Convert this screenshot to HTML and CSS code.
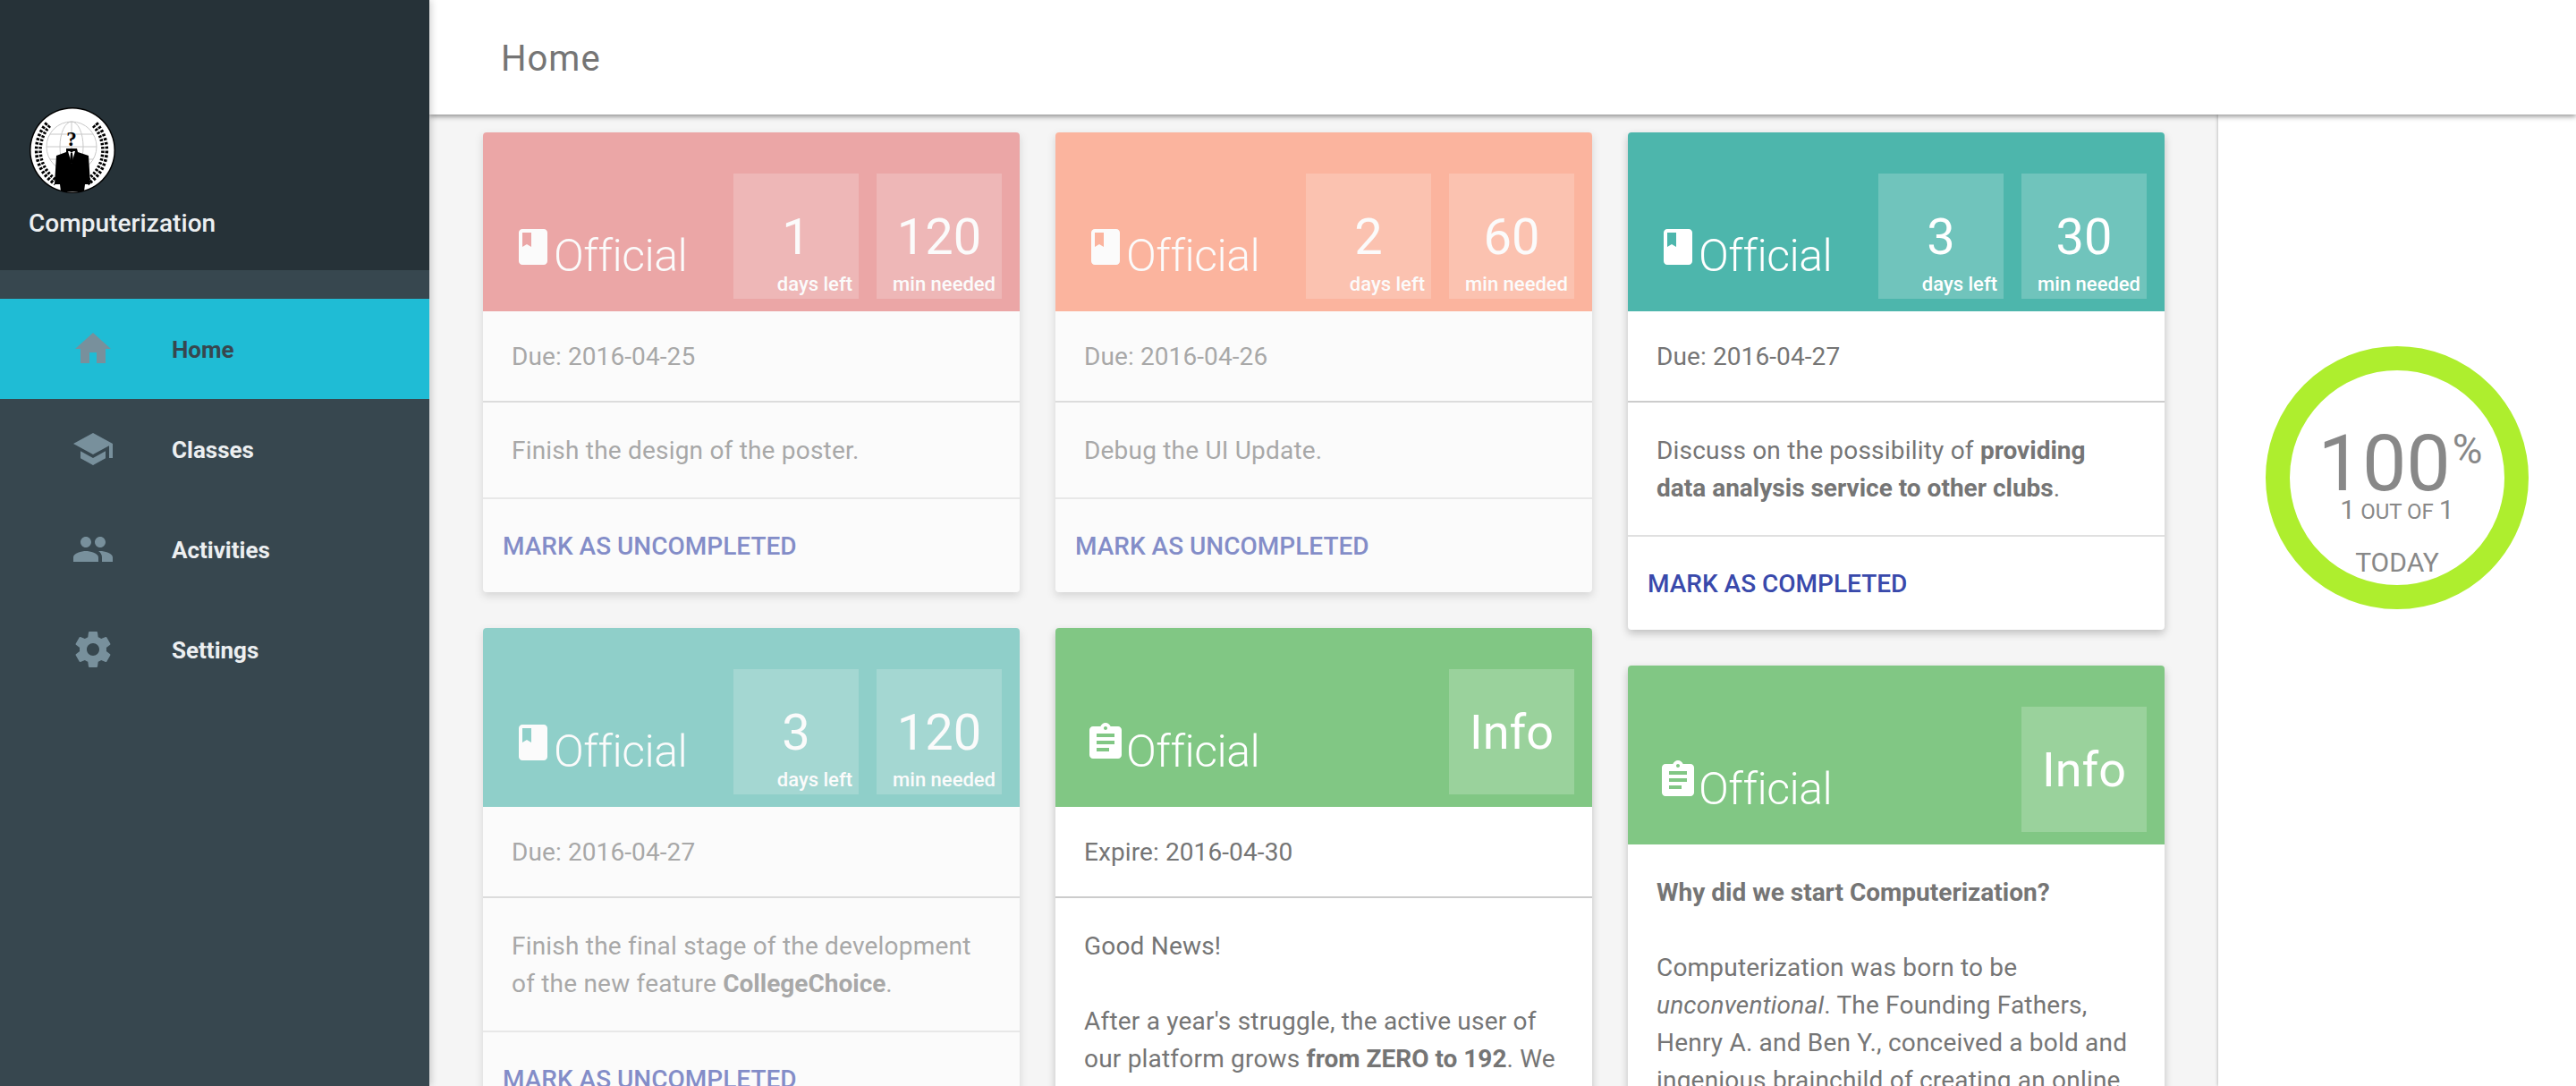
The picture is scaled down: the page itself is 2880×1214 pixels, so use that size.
FILE: index.html
```html
<!DOCTYPE html>
<html lang="en">
<head>
<meta charset="utf-8">
<title>Computerization - Home</title>
<link rel="stylesheet" href="styles.css">
</head>
<body>
<svg class="defs" width="0" height="0" aria-hidden="true">
  <symbol id="i-book" viewBox="0 0 24 24"><path d="M18 2H6c-1.1 0-2 .9-2 2v16c0 1.1.9 2 2 2h12c1.1 0 2-.9 2-2V4c0-1.1-.9-2-2-2zM6 4h5v8l-2.5-1.5L6 12V4z"/></symbol>
  <symbol id="i-clip" viewBox="0 0 24 24"><path d="M19 3h-4.18C14.4 1.84 13.3 1 12 1c-1.3 0-2.4.84-2.82 2H5c-1.1 0-2 .9-2 2v14c0 1.1.9 2 2 2h14c1.1 0 2-.9 2-2V5c0-1.1-.9-2-2-2zm-7 0c.55 0 1 .45 1 1s-.45 1-1 1-1-.45-1-1 .45-1 1-1zm2 14H7v-2h7v2zm3-4H7v-2h10v2zm0-4H7V7h10v2z"/></symbol>
</svg>
<aside class="sidebar">
  <div class="brand">
    <svg class="logo" viewBox="0 0 96 96" aria-hidden="true">
      <circle cx="48" cy="48" r="48" fill="#000"/>
      <circle cx="48" cy="48" r="46.5" fill="#fff"/>
      <g fill="none" stroke="#c8c8c8" stroke-width="1">
        <circle cx="47" cy="44" r="28"/>
        <ellipse cx="47" cy="44" rx="13" ry="28"/>
        <path d="M47 16v56M19 44h56M23 30h48M23 58h48"/>
      </g>
      <g fill="none" stroke="#000">
        <path d="M21 19C4 38 6 68 30 84" stroke-width="8" stroke-dasharray="2.6 2"/>
        <path d="M73 19C90 38 88 68 64 84" stroke-width="8" stroke-dasharray="2.6 2"/>
      </g>
      <g fill="none" stroke="#fff" stroke-width="1">
        <path d="M21 19C4 38 6 68 30 84"/>
        <path d="M73 19C90 38 88 68 64 84"/>
      </g>
      <path d="M41 46h12l1 4 12 4 2 32-6 0-1 8H35l-1-8-6 0 2-32 11-4z" fill="#000"/>
      <path d="M43 49l4 14 4-14-2 0-2 2-2-2z" fill="#fff"/>
      <path d="M46 51h2l1 9-2 4-2-4z" fill="#000"/>
      <text class="logo-q" x="47" y="43" text-anchor="middle">?</text>
    </svg>
    <div class="brand-name">Computerization</div>
  </div>
  <nav class="nav">
    <a class="nav-item active">
      <svg class="nav-icon" viewBox="0 0 24 24"><path d="M10 20v-6h4v6h5v-8h3L12 3 2 12h3v8z"/></svg>
      <span class="nav-text">Home</span>
    </a>
    <a class="nav-item">
      <svg class="nav-icon" viewBox="0 0 24 24"><path d="M5 13.18v4L12 21l7-3.82v-4L12 17l-7-3.82zM12 3L1 9l11 6 9-4.91V17h2V9L12 3z"/></svg>
      <span class="nav-text">Classes</span>
    </a>
    <a class="nav-item">
      <svg class="nav-icon" viewBox="0 0 24 24"><path d="M16 11c1.66 0 2.99-1.34 2.99-3S17.66 5 16 5c-1.66 0-3 1.34-3 3s1.34 3 3 3zm-8 0c1.66 0 2.99-1.34 2.99-3S9.66 5 8 5C6.34 5 5 6.34 5 8s1.34 3 3 3zm0 2c-2.33 0-7 1.17-7 3.5V19h14v-2.5c0-2.33-4.67-3.5-7-3.5zm8 0c-.29 0-.62.02-.97.05 1.16.84 1.97 1.97 1.97 3.45V19h6v-2.5c0-2.33-4.67-3.5-7-3.5z"/></svg>
      <span class="nav-text">Activities</span>
    </a>
    <a class="nav-item">
      <svg class="nav-icon" viewBox="0 0 24 24"><path d="M19.43 12.98c.04-.32.07-.64.07-.98s-.03-.66-.07-.98l2.11-1.65c.19-.15.24-.42.12-.64l-2-3.46c-.12-.22-.39-.3-.61-.22l-2.49 1c-.52-.4-1.08-.73-1.69-.98l-.38-2.65C14.46 2.18 14.25 2 14 2h-4c-.25 0-.46.18-.49.42l-.38 2.65c-.61.25-1.17.59-1.69.98l-2.49-1c-.23-.09-.49 0-.61.22l-2 3.46c-.13.22-.07.49.12.64l2.11 1.65c-.04.32-.07.65-.07.98s.03.66.07.98l-2.11 1.65c-.19.15-.24.42-.12.64l2 3.46c.12.22.39.3.61.22l2.49-1c.52.4 1.08.73 1.69.98l.38 2.65c.03.24.24.42.49.42h4c.25 0 .46-.18.49-.42l.38-2.65c.61-.25 1.17-.59 1.69-.98l2.49 1c.23.09.49 0 .61-.22l2-3.46c.12-.22.07-.49-.12-.64l-2.11-1.65zM12 15.5c-1.93 0-3.5-1.57-3.5-3.5s1.57-3.5 3.5-3.5 3.5 1.57 3.5 3.5-1.57 3.5-3.5 3.5z"/></svg>
      <span class="nav-text">Settings</span>
    </a>
  </nav>
</aside>
<div class="main">
  <header class="topbar"><h1 class="title">Home</h1></header>
  <div class="content">
    <div class="feed">
      <div class="column">
        <article class="card done pink">
          <div class="card-head">
            <div class="label"><svg class="label-icon"><use href="#i-book"/></svg><span class="label-text">Official</span></div>
            <div class="tiles">
              <div class="tile"><div class="tile-value">1</div><div class="tile-cap">days left</div></div>
              <div class="tile"><div class="tile-value">120</div><div class="tile-cap">min needed</div></div>
            </div>
          </div>
          <div class="card-date">Due: 2016-04-25</div>
          <div class="card-body"><p>Finish the design of the poster.</p></div>
          <div class="card-foot"><a class="action">MARK AS UNCOMPLETED</a></div>
        </article>
        <article class="card done teal">
          <div class="card-head">
            <div class="label"><svg class="label-icon"><use href="#i-book"/></svg><span class="label-text">Official</span></div>
            <div class="tiles">
              <div class="tile"><div class="tile-value">3</div><div class="tile-cap">days left</div></div>
              <div class="tile"><div class="tile-value">120</div><div class="tile-cap">min needed</div></div>
            </div>
          </div>
          <div class="card-date">Due: 2016-04-27</div>
          <div class="card-body"><p>Finish the final stage of the development of the new feature <b>CollegeChoice</b>.</p></div>
          <div class="card-foot"><a class="action">MARK AS UNCOMPLETED</a></div>
        </article>
      </div>
      <div class="column">
        <article class="card done orange">
          <div class="card-head">
            <div class="label"><svg class="label-icon"><use href="#i-book"/></svg><span class="label-text">Official</span></div>
            <div class="tiles">
              <div class="tile"><div class="tile-value">2</div><div class="tile-cap">days left</div></div>
              <div class="tile"><div class="tile-value">60</div><div class="tile-cap">min needed</div></div>
            </div>
          </div>
          <div class="card-date">Due: 2016-04-26</div>
          <div class="card-body"><p>Debug the UI Update.</p></div>
          <div class="card-foot"><a class="action">MARK AS UNCOMPLETED</a></div>
        </article>
        <article class="card green">
          <div class="card-head">
            <div class="label"><svg class="label-icon"><use href="#i-clip"/></svg><span class="label-text">Official</span></div>
            <div class="tiles">
              <div class="tile tile-info">Info</div>
            </div>
          </div>
          <div class="card-date">Expire: 2016-04-30</div>
          <div class="card-body">
            <p>Good News!</p>
            <p>After a year's struggle, the active user of our platform grows <b>from ZERO to 192</b>. We</p>
          </div>
        </article>
      </div>
      <div class="column">
        <article class="card teal">
          <div class="card-head">
            <div class="label"><svg class="label-icon"><use href="#i-book"/></svg><span class="label-text">Official</span></div>
            <div class="tiles">
              <div class="tile"><div class="tile-value">3</div><div class="tile-cap">days left</div></div>
              <div class="tile"><div class="tile-value">30</div><div class="tile-cap">min needed</div></div>
            </div>
          </div>
          <div class="card-date">Due: 2016-04-27</div>
          <div class="card-body"><p>Discuss on the possibility of <b>providing data analysis service to other clubs</b>.</p></div>
          <div class="card-foot"><a class="action">MARK AS COMPLETED</a></div>
        </article>
        <article class="card green">
          <div class="card-head">
            <div class="label"><svg class="label-icon"><use href="#i-clip"/></svg><span class="label-text">Official</span></div>
            <div class="tiles">
              <div class="tile tile-info">Info</div>
            </div>
          </div>
          <div class="card-body">
            <p><b>Why did we start Computerization?</b></p>
            <p>Computerization was born to be <i>unconventional</i>. The Founding Fathers, Henry A. and Ben Y., conceived a bold and ingenious brainchild of creating an online</p>
          </div>
        </article>
      </div>
    </div>
    <aside class="panel">
      <div class="ring">
        <div class="ring-percent"><span class="ring-num">100</span><span class="ring-sign">%</span></div>
        <div class="ring-count"><span class="ring-big">1</span> OUT OF <span class="ring-big">1</span></div>
        <div class="ring-period">TODAY</div>
      </div>
    </aside>
  </div>
</div>
</body>
</html>
```
FILE: styles.css
```css
* { box-sizing: border-box; }
html, body { margin: 0; height: 100%; }
body {
  display: flex;
  height: 1214px;
  overflow: hidden;
  background: #f5f5f5;
  font-family: Roboto, "Noto Sans", sans-serif;
  color: #757575;
}
.defs { position: absolute; }

/* Sidebar */
.sidebar {
  flex: 0 0 480px;
  background: #37474f;
  box-shadow: 2px 0 8px rgba(0,0,0,.18);
  z-index: 3;
}
.brand {
  height: 302px;
  background: #263238;
  padding: 120px 0 0 33px;
}
.logo { display: block; width: 96px; height: 96px; }
.logo-q { font: 700 23px "Liberation Serif", serif; fill: #000; }
.brand-name {
  margin: 16px 0 0 -1px;
  font-size: 28px;
  line-height: 36px;
  font-weight: 500;
  letter-spacing: .06px;
  color: #eceff1;
}
.nav { padding-top: 32px; }
.nav-item {
  display: flex;
  align-items: center;
  height: 112px;
  padding-left: 80px;
  color: #eceff1;
  font-size: 26px;
  font-weight: 700;
}
.nav-item.active { background: #1fbcd5; color: #37474f; }
.nav-icon { width: 48px; height: 48px; margin-right: 64px; fill: #78909c; }
.nav-text { margin-top: 2px; }

/* Main */
.main { flex: 1; min-width: 0; display: flex; flex-direction: column; }
.topbar {
  flex: 0 0 128px;
  display: flex;
  align-items: center;
  padding: 2px 0 0 80px;
  background: #fff;
  box-shadow: 0 2px 6px rgba(0,0,0,.45);
  z-index: 2;
}
.title { margin: 0; font-size: 40px; font-weight: 400; color: #757575; letter-spacing: 1px; }
.content { flex: 1; min-height: 0; display: flex; }
.feed { flex: 1; display: flex; gap: 40px; padding: 20px 0 0 60px; }
.column { flex: 0 0 600px; display: flex; flex-direction: column; gap: 40px; }

/* Card */
.card {
  flex: none;
  background: #fff;
  border-radius: 4px;
  overflow: hidden;
  box-shadow: 0 4px 10px rgba(0,0,0,.22);
}
.card.done { opacity: .6; }
.pink .card-head { background: #e57373; }
.orange .card-head { background: #ff8a65; }
.teal .card-head { background: #4db6ac; }
.green .card-head { background: #81c784; }
.card-head {
  display: flex;
  justify-content: space-between;
  height: 200px;
  padding: 46px 20px 14px 32px;
  color: #fff;
}
.label { display: flex; margin-top: 58px; align-self: flex-start; }
.label-icon { width: 48px; height: 48px; fill: #fff; }
.label-text { font-size: 50px; line-height: 68px; font-weight: 300; margin-left: -1px; letter-spacing: -.5px; }
.tiles { display: flex; gap: 20px; }
.tile {
  width: 140px;
  height: 140px;
  background: rgba(255,255,255,.2);
  padding-top: 36px;
}
.tile-value { font-size: 56px; line-height: 70px; text-align: center; }
.tile-cap { margin-top: 4px; padding-right: 7px; font-size: 22px; line-height: 28px; font-weight: 500; text-align: right; }
.tile-info { font-size: 54px; line-height: 70px; text-align: center; }
.card-date {
  height: 102px;
  padding: 30px 32px 28px;
  font-size: 28px;
  line-height: 42px;
  letter-spacing: .1px;
  border-bottom: 2px solid #ccc;
}
.card-body { padding: 33px 32px 31px; font-size: 28px; line-height: 42px; letter-spacing: .2px; }
.card-body p { margin: 0; }
.card-body p + p { margin-top: 42px; }
.card-body b { letter-spacing: 0; }
.card-foot {
  display: flex;
  align-items: center;
  height: 106px;
  padding-left: 22px;
  border-top: 2px solid #e0e0e0;
}
.action { font-size: 28px; font-weight: 500; color: #3949ab; }

/* Right panel */
.panel {
  flex: 0 0 400px;
  background: #fff;
  box-shadow: -1px 0 3px rgba(0,0,0,.2);
  padding: 259px 0 0 53px;
  color: #888;
}
.ring {
  width: 294px;
  height: 294px;
  border: 27px solid #aeee2e;
  border-radius: 50%;
  display: flex;
  flex-direction: column;
  align-items: center;
  padding-top: 58px;
  text-align: center;
}
.ring-percent { display: flex; align-items: flex-start; height: 92px; line-height: 92px; margin-left: 7px; }
.ring-num { font-size: 88px; }
.ring-sign { font-size: 46px; line-height: 60px; margin-left: 2px; }
.ring-count { font-size: 24px; line-height: 36px; margin-top: -12px; }
.ring-big { font-size: 30px; }
.ring-period { margin-top: 21px; font-size: 30px; line-height: 36px; }
```
